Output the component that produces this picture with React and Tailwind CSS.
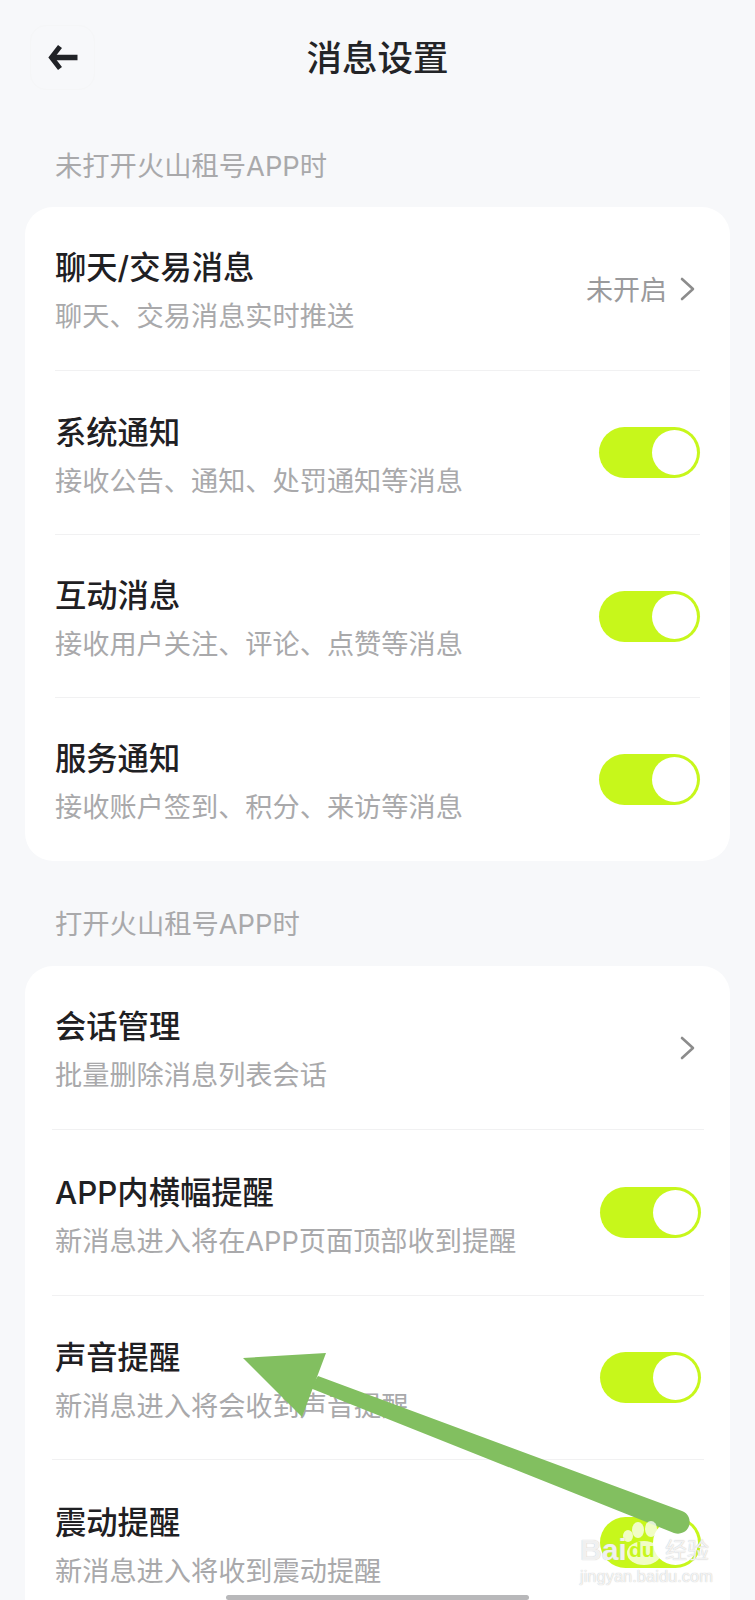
const cjk = "font-['Inter','Noto_Sans_CJK_SC','Liberation_Sans',sans-serif]"

const groups = [
  [
    { title: "聊天/交易消息", desc: "聊天、交易消息实时推送", value: "未开启", arrow: true, h: "h-[164px]", pt: "pt-[7px]" },
    { title: "系统通知", desc: "接收公告、通知、处罚通知等消息", h: "h-[164px]", pt: "pt-[8px]" },
    { title: "互动消息", desc: "接收用户关注、评论、点赞等消息", h: "h-[163px]", pt: "pt-[8px]" },
    { title: "服务通知", desc: "接收账户签到、积分、来访等消息", h: "h-[163px]", pt: "pt-[7px]", last: true },
  ],
  [
    { title: "会话管理", desc: "批量删除消息列表会话", arrow: true, h: "h-[164px]", pt: "pt-[7px]" },
    { title: "APP内横幅提醒", desc: "新消息进入将在APP页面顶部收到提醒", h: "h-[166px]", pt: "pt-[8px]" },
    { title: "声音提醒", desc: "新消息进入将会收到声音提醒", h: "h-[164px]", pt: "pt-[8px]" },
    { title: "震动提醒", desc: "新消息进入将收到震动提醒", h: "h-[165px]", pt: "pt-[8px]", last: true },
  ],
]

function Toggle() {
  return (
    <div className="flex items-center justify-end w-[101px] h-[51px] rounded-full bg-[#c7f71b] pr-[3px] shrink-0">
      <div className="w-[45px] h-[45px] rounded-full bg-white" />
    </div>
  )
}

function Chevron() {
  return (
    <svg width="17" height="24" viewBox="0 0 17 24" fill="none" className="shrink-0">
      <path d="M3 2 L14 12 L3 22" stroke="#8c8c8c" strokeWidth="2.6" strokeLinecap="round" strokeLinejoin="round" />
    </svg>
  )
}

function Row({ item, wide }) {
  return (
    <div className={`${item.h} flex items-center justify-between ${item.last ? "" : "border-b border-[#f1f1f2]"}`}>
      <div className={`${item.pt} ${wide ? "pl-[3px]" : ""}`}>
        <div className="text-[31.3px] leading-[40px] font-medium text-[#1f2023]">{item.title}</div>
        <div className="mt-[10px] text-[27.2px] leading-[38px] text-[#a9a9ab] whitespace-nowrap">{item.desc}</div>
      </div>
      {item.arrow ? (
        <div className={`flex items-center gap-[12px] ${wide ? "pr-[8px]" : "pr-[4px]"}`}>
          {item.value && <span className="text-[27px] leading-[38px] pt-[4px] text-[#9a9a9c]">{item.value}</span>}
          <Chevron />
        </div>
      ) : (
        <div className={wide ? "pr-[3px]" : ""}>
          <Toggle />
        </div>
      )}
    </div>
  )
}

export default function App() {
  return (
    <div className={`relative h-[1600px] overflow-hidden bg-[#f7f8fa] ${cjk}`}>
      {/* Header */}
      <div className="relative flex items-center justify-center h-[115px]">
        <div className="absolute left-[30px] top-[25px] w-[65px] h-[65px] rounded-2xl border border-[#f5f6f7] flex items-center justify-center">
          <svg width="30" height="27" viewBox="0 0 30 27" fill="none">
            <path d="M12 2.5 L3.5 13.5 L12 24.5" stroke="#202226" strokeWidth="5" strokeLinejoin="miter" />
            <path d="M5 13.5 H29.5" stroke="#202226" strokeWidth="5.5" />
          </svg>
        </div>
        <h1 className="text-[35.5px] leading-[46px] font-medium text-[#232427] pt-[2px]">消息设置</h1>
      </div>

      {/* 未打开 */}
      <div className="mt-[32px] pl-[55px] text-[27.3px] leading-[40px] text-[#a9a9ab]">未打开火山租号APP时</div>
      <div className="mt-[20px] mx-[25px] px-[30px] bg-white rounded-[28px]">
        {groups[0].map((item) => (
          <Row key={item.title} item={item} />
        ))}
      </div>

      {/* 打开 */}
      <div className="mt-[44px] pl-[55px] text-[27.3px] leading-[40px] text-[#a9a9ab]">打开火山租号APP时</div>
      <div className="mt-[21px] mx-[25px] pl-[27px] pr-[26px] bg-white rounded-[28px]">
        {groups[1].map((item) => (
          <Row key={item.title} item={item} wide />
        ))}
      </div>

      {/* home indicator */}
      <div className="absolute left-[226px] bottom-0 w-[303px] h-[5px] rounded-full bg-[#b8b8ba]" />

      {/* tutorial arrow */}
      <svg className="absolute left-0 top-0" width="755" height="1600" viewBox="0 0 755 1600" fill="none">
        <path d="M243 1358 L326 1353 L302 1417 Z" fill="#82bf60" />
        <path d="M318 1376 L682 1511 A11.5 11.5 0 0 1 674 1533 L310 1388 Z" fill="#82bf60" />
        <g fill="#ffffff" fillOpacity="0.75">
          <ellipse cx="638" cy="1530" rx="6" ry="8" />
          <ellipse cx="651" cy="1529" rx="6" ry="8" />
          <ellipse cx="660" cy="1538" rx="5" ry="6" />
          <ellipse cx="628" cy="1536" rx="5" ry="6" />
          <ellipse cx="644" cy="1553" rx="17" ry="12" />
        </g>
      </svg>

      {/* baidu watermark */}
      <div className="absolute left-[580px] top-[1533px] w-[134px] font-['Liberation_Sans',sans-serif] text-white/80 [text-shadow:0_0_1px_#b5b5b5]">
        <div className="flex items-center h-[34px]">
          <span className="text-[30px] leading-[34px] font-bold w-[49px]">Bai</span>
          <span className="text-[21px] leading-[34px] font-bold text-[#c7f71b] w-[36px] [text-shadow:none]">du</span>
          <span className={`text-[22px] leading-[34px] ${cjk}`}>经验</span>
        </div>
        <div className="text-[16.5px] leading-[18px] whitespace-nowrap">jingyan.baidu.com</div>
      </div>
    </div>
  )
}
